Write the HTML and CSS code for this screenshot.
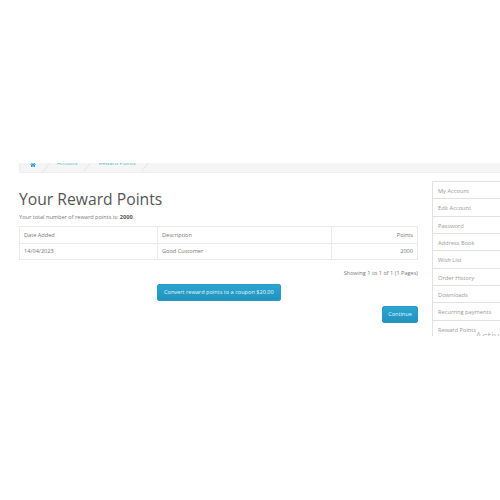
FILE: index.html
```html
<!DOCTYPE html>
<html lang="en">
<head>
<meta charset="utf-8">
<title>Your Reward Points</title>
<link rel="stylesheet" href="styles.css">
</head>
<body>
<div class="viewport">
  <ul class="breadcrumb">
    <li class="crumb home"><svg class="home-icon" viewBox="0 0 12 10"><path d="M6 0 0 5.2l.7.7L6 1.4l5.3 4.5.7-.7L9.8 3.300V.8H8.400v1.300zM2 6v4h3V7h2v3h3V6L6 2.600z"/></svg></li>
    <li class="crumb">Account</li>
    <li class="crumb">Reward Points</li>
  </ul>
  <div class="columns">
    <main class="content">
      <h1 class="title">Your Reward Points</h1>
      <p class="total">Your total number of reward points is: <b>2000</b>.</p>
      <table class="points">
        <tr><td class="c-date">Date Added</td><td class="c-desc">Description</td><td class="c-pts">Points</td></tr>
        <tr><td class="c-date">14/04/2023</td><td class="c-desc">Good Customer</td><td class="c-pts">2000</td></tr>
      </table>
      <p class="pages">Showing 1 to 1 of 1 (1 Pages)</p>
      <div class="convert-row"><a class="btn">Convert reward points to a coupon $20.00</a></div>
      <div class="continue-row"><a class="btn btn-continue">Continue</a></div>
    </main>
    <aside class="menu">
      <a class="item">My Account</a>
      <a class="item">Edit Account</a>
      <a class="item">Password</a>
      <a class="item">Address Book</a>
      <a class="item">Wish List</a>
      <a class="item">Order History</a>
      <a class="item">Downloads</a>
      <a class="item">Recurring payments</a>
      <a class="item">Reward Points</a>
    </aside>
  </div>
  <div class="watermark">Activate Windows</div>
</div>
</body>
</html>
```
FILE: styles.css
```css
* { box-sizing: border-box; }
html, body { margin: 0; background: #fff; }
body { padding-top: 163px; font-family: "Open Sans", "Liberation Sans", sans-serif; font-size: 5.600px; color: #777; }
.viewport { position: relative; height: 173px; overflow: hidden; }
.breadcrumb { display: flex; align-items: flex-end; list-style: none; height: 10px; margin: 0 0 0 19px; padding: 0; overflow: hidden; background: #f5f5f5; border-bottom: 1px solid #eee; border-left: 1px solid #eee; border-radius: 0 0 0 2px; }
.crumb { position: relative; padding: 0 10px 5.500px 11px; line-height: 7px; font-size: 5.500px; color: #5cb8dc; white-space: nowrap; }
.crumb::after { content: ""; position: absolute; right: -2px; top: -5px; width: 1px; height: 18px; background: #e8e8e8; transform: rotate(38deg); }
.home { padding-left: 10px; }
.home-icon { display: block; width: 6px; height: 5px; fill: #23a1d1; }
.columns { display: flex; align-items: flex-start; margin: 9px 0 0 19px; }
.content { flex: none; width: 399px; }
.title { margin: 5px 0 0; font-size: 15.700px; font-weight: 400; line-height: 24px; color: #555; }
.total { margin: 2px 0 0; line-height: 8px; }
.total b { color: #555; }
.points { width: 100%; margin-top: 5px; border-collapse: collapse; table-layout: fixed; }
.points td { height: 16.500px; padding: 0 4px; border: 1px solid #eaeaea; line-height: 8px; }
.c-date { width: 138px; }
.c-pts { width: 86px; text-align: right; }
.pages { margin: 9px 0 0; line-height: 8px; text-align: right; }
.convert-row { display: flex; margin-top: 7px; padding-left: 138px; }
.continue-row { display: flex; justify-content: flex-end; margin-top: 5px; }
.btn { display: block; height: 17px; padding: 0 6px; border: 1px solid #2a9ac4; border-radius: 2px; background: linear-gradient(#2ba5d3, #2293bd); color: #e8f5fa; line-height: 15px; white-space: nowrap; }
.btn-continue { width: 36px; padding: 0; text-align: center; }
.menu { flex: none; display: flex; flex-direction: column; width: 100px; margin: -1px 0 0 14px; border-left: 1px solid #e2e2e2; border-top: 1px solid #e2e2e2; }
.item { flex: none; height: 17.330px; padding-left: 5px; border-bottom: 1px solid #e2e2e2; line-height: 18px; font-size: 5.700px; color: #999; }
.watermark { position: absolute; left: 475px; top: 166px; font-size: 11px; line-height: 14px; color: rgba(120,120,120,.5); white-space: nowrap; }
```
